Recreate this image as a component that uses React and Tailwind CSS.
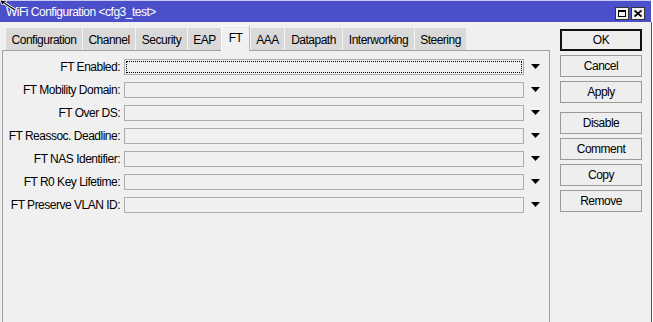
const TABS = [
  { name: 'Configuration', w: 'w-[77px]' },
  { name: 'Channel', w: 'w-[53px]' },
  { name: 'Security', w: 'w-[52px]' },
  { name: 'EAP', w: 'w-[34px]' },
  { name: 'FT', w: 'w-[29px]', active: true },
  { name: 'AAA', w: 'w-[34px]' },
  { name: 'Datapath', w: 'w-[58px]' },
  { name: 'Interworking', w: 'w-[72px]' },
  { name: 'Steering', w: 'w-[52px]' },
];

const FIELDS = [
  'FT Enabled:',
  'FT Mobility Domain:',
  'FT Over DS:',
  'FT Reassoc. Deadline:',
  'FT NAS Identifier:',
  'FT R0 Key Lifetime:',
  'FT Preserve VLAN ID:',
];

const BUTTONS = [
  { label: 'OK', mt: 'mt-0', primary: true },
  { label: 'Cancel', mt: 'mt-[4px]' },
  { label: 'Apply', mt: 'mt-[4px]' },
  { label: 'Disable', mt: 'mt-[9px]' },
  { label: 'Comment', mt: 'mt-[4px]' },
  { label: 'Copy', mt: 'mt-[4px]' },
  { label: 'Remove', mt: 'mt-[4px]' },
];

function DropArrow() {
  return (
    <svg width="9" height="5" viewBox="0 0 9 5" className="ml-[7px] mt-[-1px]">
      <polygon points="0,0 9,0 4.5,5" fill="#000" />
    </svg>
  );
}

function FieldRow({ label, focused }) {
  return (
    <div className="flex items-center h-[16px]">
      <span className="w-[117px] text-right leading-[16px] whitespace-nowrap">{label}</span>
      <div className="ml-[4px] w-[400px] h-[16px] border border-[#adadad] bg-[#f0f0f0] p-[1px]">
        {focused && <div className="w-full h-full border border-dotted border-black" />}
      </div>
      <DropArrow />
    </div>
  );
}

export default function App() {
  return (
    <div className="relative w-[653px] h-[322px] bg-white overflow-hidden text-[12px] tracking-[-0.5px] text-black font-['Liberation_Sans',Arial,sans-serif]">
      <div className="w-[652px] flex flex-col">
        {/* title bar */}
        <div className="h-[22px] w-[651px] border-t border-[#c9cbef] bg-[#4b4fc9] flex items-center pl-[6px] pr-[6px]">
          <span className="text-white leading-none mt-[1px]">WiFi Configuration &lt;cfg3_test&gt;</span>
          <div className="ml-auto flex gap-[2px] mt-[3px]">
            <div className="w-[14px] h-[13px] bg-[#f0f0f0] border border-[#333] flex items-center justify-center">
              <div className="w-[8px] h-[7px] border border-black border-t-2" />
            </div>
            <div className="w-[14px] h-[13px] bg-[#f0f0f0] border border-[#333] flex items-center justify-center">
              <svg width="8" height="7" viewBox="0 0 8 7">
                <path d="M0.5 0.5 L7.5 6.5 M7.5 0.5 L0.5 6.5" stroke="#000" strokeWidth="1.8" />
              </svg>
            </div>
          </div>
        </div>

        {/* body */}
        <div className="flex h-[300px] bg-[#f0f0f0] border-r border-[#5a5a5a]">
          <div className="w-[550px] pl-[2px] pt-[3px] flex flex-col">
            <div className="flex items-end h-[25px] pl-[3px]">
              {TABS.map(t =>
                t.active ? (
                  <div
                    key={t.name}
                    className={`${t.w} h-[26px] -mb-px relative z-10 bg-[#f0f0f0] border-l border-t border-r border-l-white border-t-white border-r-[#b9b9b9] flex items-center justify-center pb-[2px]`}
                  >
                    {t.name}
                  </div>
                ) : (
                  <div
                    key={t.name}
                    className={`${t.w} h-[23px] bg-[#d9d9d9] border-l border-t border-[#f4f4f4] flex items-center justify-center pt-[2px]`}
                  >
                    {t.name}
                  </div>
                )
              )}
            </div>
            <div className="flex-1 border-l border-t border-r border-[#a0a0a0] pt-[8px] flex flex-col gap-[7px]">
              {FIELDS.map((f, i) => (
                <FieldRow key={f} label={f} focused={i === 0} />
              ))}
            </div>
          </div>

          <div className="pl-[10px] pt-[7px] flex flex-col">
            {BUTTONS.map(b => (
              <div
                key={b.label}
                className={`${b.mt} w-[82px] h-[22px] flex items-center justify-center bg-[#eeeeee] ${
                  b.primary ? 'border-2 border-[#111]' : 'border border-[#9a9a9a]'
                }`}
              >
                {b.label}
              </div>
            ))}
          </div>
        </div>
      </div>

      {/* resize cursor over the corner */}
      <svg width="17" height="12" viewBox="0 0 17 12" className="absolute top-0 left-0">
        <path d="M1 1 L15 10" stroke="#fff" strokeWidth="3" />
        <path d="M1 1 L15 10" stroke="#000" strokeWidth="1.2" />
        <polygon points="0,0 7,1 2,5" fill="#000" stroke="#fff" strokeWidth="0.8" />
      </svg>
    </div>
  );
}
